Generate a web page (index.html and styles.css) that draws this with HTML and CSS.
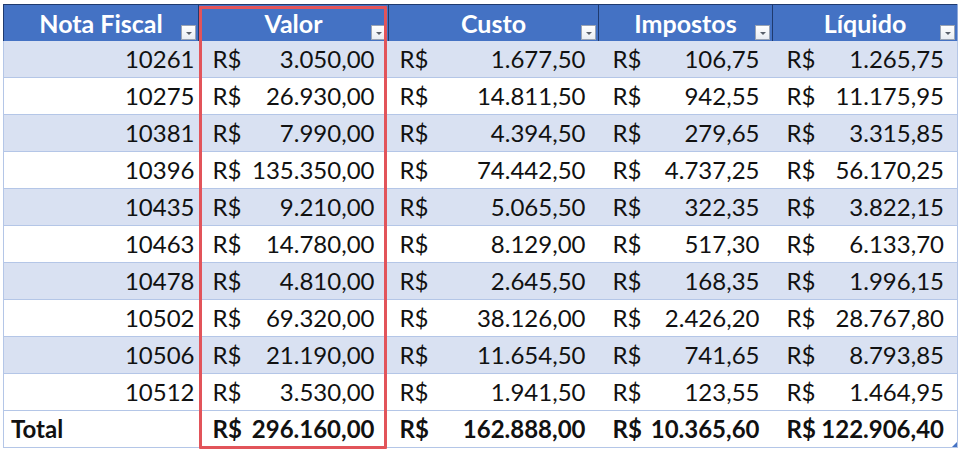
FILE: index.html
```html
<!DOCTYPE html>
<html lang="pt-BR">
<head>
<meta charset="utf-8">
<link rel="stylesheet" href="styles.css">
</head>
<body>
<div class="sheet">
  <table class="tbl">
    <colgroup>
      <col class="c1"><col class="c2"><col class="c3"><col class="c4"><col class="c5">
    </colgroup>
    <thead>
      <tr>
        <th>Nota Fiscal<span class="dd"></span></th>
        <th>Valor<span class="dd"></span></th>
        <th>Custo<span class="dd"></span></th>
        <th>Impostos<span class="dd"></span></th>
        <th>Líquido<span class="dd"></span></th>
      </tr>
    </thead>
    <tbody>
      <tr><td class="nf">10261</td><td class="cur v"><span>R$</span><span>3.050,00</span></td><td class="cur c"><span>R$</span><span>1.677,50</span></td><td class="cur i"><span>R$</span><span>106,75</span></td><td class="cur l"><span>R$</span><span>1.265,75</span></td></tr>
      <tr><td class="nf">10275</td><td class="cur v"><span>R$</span><span>26.930,00</span></td><td class="cur c"><span>R$</span><span>14.811,50</span></td><td class="cur i"><span>R$</span><span>942,55</span></td><td class="cur l"><span>R$</span><span>11.175,95</span></td></tr>
      <tr><td class="nf">10381</td><td class="cur v"><span>R$</span><span>7.990,00</span></td><td class="cur c"><span>R$</span><span>4.394,50</span></td><td class="cur i"><span>R$</span><span>279,65</span></td><td class="cur l"><span>R$</span><span>3.315,85</span></td></tr>
      <tr><td class="nf">10396</td><td class="cur v"><span>R$</span><span>135.350,00</span></td><td class="cur c"><span>R$</span><span>74.442,50</span></td><td class="cur i"><span>R$</span><span>4.737,25</span></td><td class="cur l"><span>R$</span><span>56.170,25</span></td></tr>
      <tr><td class="nf">10435</td><td class="cur v"><span>R$</span><span>9.210,00</span></td><td class="cur c"><span>R$</span><span>5.065,50</span></td><td class="cur i"><span>R$</span><span>322,35</span></td><td class="cur l"><span>R$</span><span>3.822,15</span></td></tr>
      <tr><td class="nf">10463</td><td class="cur v"><span>R$</span><span>14.780,00</span></td><td class="cur c"><span>R$</span><span>8.129,00</span></td><td class="cur i"><span>R$</span><span>517,30</span></td><td class="cur l"><span>R$</span><span>6.133,70</span></td></tr>
      <tr><td class="nf">10478</td><td class="cur v"><span>R$</span><span>4.810,00</span></td><td class="cur c"><span>R$</span><span>2.645,50</span></td><td class="cur i"><span>R$</span><span>168,35</span></td><td class="cur l"><span>R$</span><span>1.996,15</span></td></tr>
      <tr><td class="nf">10502</td><td class="cur v"><span>R$</span><span>69.320,00</span></td><td class="cur c"><span>R$</span><span>38.126,00</span></td><td class="cur i"><span>R$</span><span>2.426,20</span></td><td class="cur l"><span>R$</span><span>28.767,80</span></td></tr>
      <tr><td class="nf">10506</td><td class="cur v"><span>R$</span><span>21.190,00</span></td><td class="cur c"><span>R$</span><span>11.654,50</span></td><td class="cur i"><span>R$</span><span>741,65</span></td><td class="cur l"><span>R$</span><span>8.793,85</span></td></tr>
      <tr><td class="nf">10512</td><td class="cur v"><span>R$</span><span>3.530,00</span></td><td class="cur c"><span>R$</span><span>1.941,50</span></td><td class="cur i"><span>R$</span><span>123,55</span></td><td class="cur l"><span>R$</span><span>1.464,95</span></td></tr>
    </tbody>
    <tfoot>
      <tr><td class="tot">Total</td><td class="cur v"><span>R$</span><span>296.160,00</span></td><td class="cur c"><span>R$</span><span>162.888,00</span></td><td class="cur i"><span>R$</span><span>10.365,60</span></td><td class="cur l"><span>R$</span><span>122.906,40</span></td></tr>
    </tfoot>
  </table>
  <div class="mark"></div>
  <div class="handle"></div>
</div>
</body>
</html>
```

FILE: styles.css
```css
html, body {
  margin: 0;
  padding: 0;
  background: #ffffff;
}
body {
  font-family: "Lato", "Open Sans", sans-serif;
  color: #111111;
}
.sheet {
  position: relative;
  width: 960px;
  height: 449px;
  padding: 4px 0 0 3px;
  box-sizing: border-box;
}
.tbl {
  border-collapse: collapse;
  table-layout: fixed;
  width: 954px;
  font-size: 24px;
}
.c1 { width: 195px; }
.c2 { width: 190px; }
.c3 { width: 210px; }
.c4 { width: 174px; }
.c5 { width: 185px; }

.tbl th {
  position: relative;
  height: 36px;
  padding: 0;
  background: #4472c4;
  color: #ffffff;
  font-weight: 700;
  font-size: 25px;
  text-align: center;
  border-top: 1px solid #1f3a6e;
  border-right: 1px solid #1f3a6e;
  border-bottom: 0;
  line-height: 36px;
}
.tbl th:first-child { border-left: 1px solid #1f3a6e; }
.tbl th:last-child { border-right: 1px solid #8ea9db; }

.dd {
  position: absolute;
  right: 2px;
  bottom: 1px;
  width: 13px;
  height: 13px;
  border: 1px solid #9aa4b4;
  background: linear-gradient(#ffffff, #e9edf3);
}
.dd::after {
  content: "";
  position: absolute;
  left: 4px;
  top: 6px;
  border-left: 3px solid transparent;
  border-right: 3px solid transparent;
  border-top: 3px solid #59606b;
}

.tbl td {
  height: 36px;
  padding: 0;
  border-bottom: 1px solid #b4c6e7;
  line-height: 36px;
  white-space: nowrap;
}
.tbl tr td:first-child { border-left: 1px solid #b4c6e7; }
.tbl tr td:last-child { border-right: 1px solid #b4c6e7; }
.tbl tbody tr:nth-child(odd) td { background: #d9e1f2; }
.tbl tbody tr:nth-child(even) td { background: #ffffff; }

.nf {
  text-align: right;
  padding-right: 4px !important;
}
.cur span:first-child { float: left; }
.cur span:last-child { float: right; }
.v { padding: 0 14px 0 14px !important; }
.c { padding: 0 13px 0 11px !important; }
.i { padding: 0 13px 0 14px !important; }
.l { padding: 0 13px 0 14px !important; }

.tbl tfoot td {
  font-weight: 700;
  background: #ffffff;
  border-top: 1px solid #8ea9db;
  border-bottom: 1px solid #b4c6e7;
}
.tot {
  padding-left: 7px !important;
  text-align: left;
}

.mark {
  position: absolute;
  left: 199px;
  top: 6px;
  width: 182px;
  height: 437px;
  border: 3px solid #e2545a;
  border-radius: 1px;
  pointer-events: none;
}
.handle {
  position: absolute;
  left: 952px;
  top: 442px;
  width: 0;
  height: 0;
  border-left: 5px solid transparent;
  border-bottom: 5px solid #4472c4;
}
```
